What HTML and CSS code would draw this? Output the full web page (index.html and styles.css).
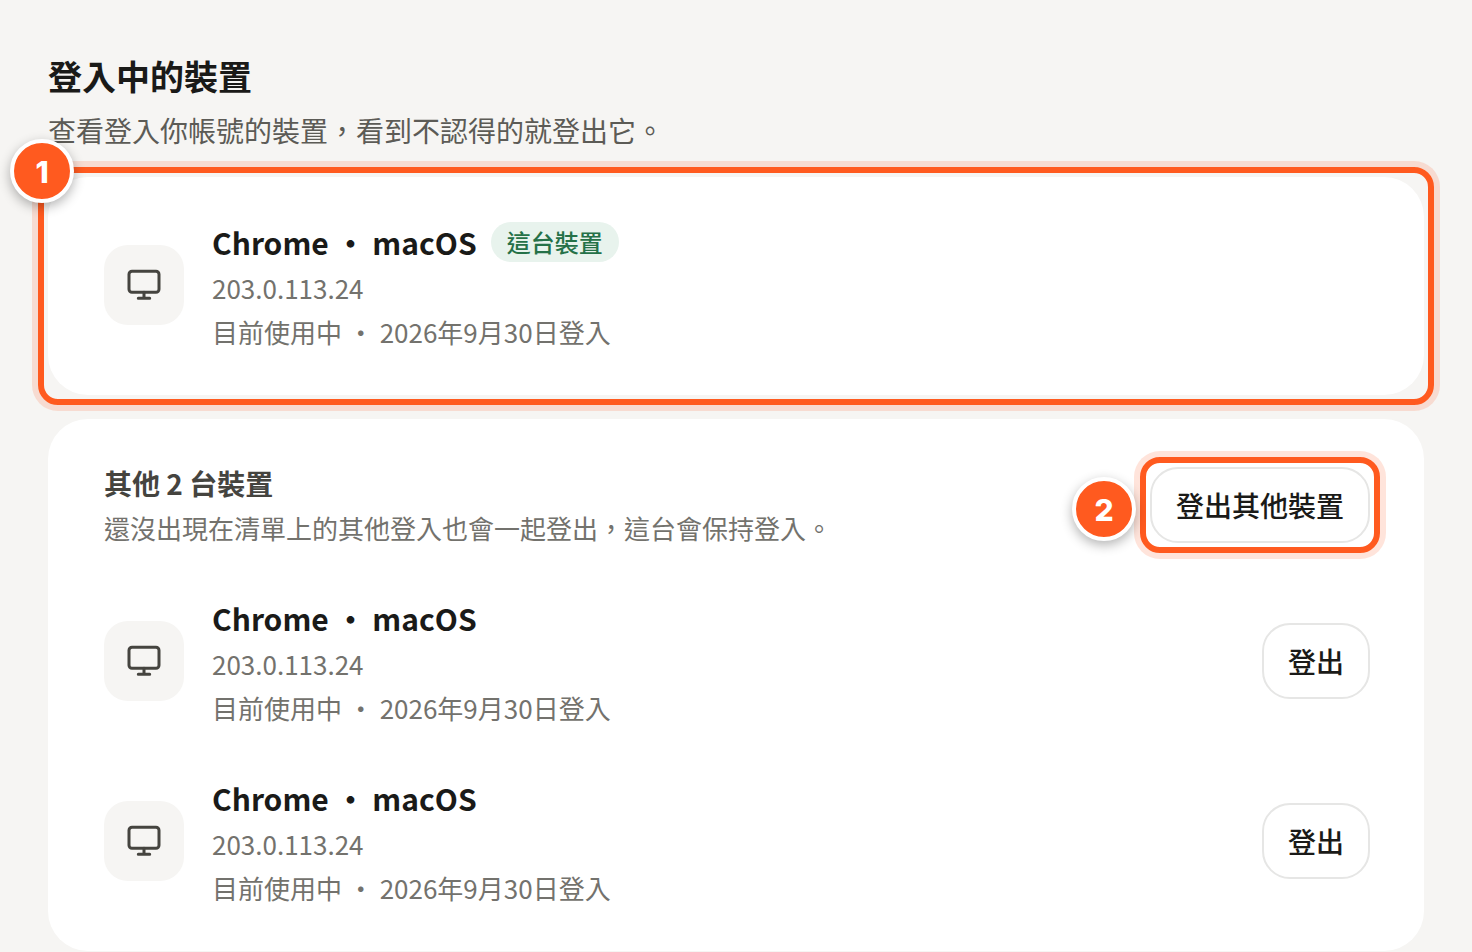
FILE: index.html
```html
<!DOCTYPE html>
<html lang="zh-Hant">
<head>
  <meta charset="UTF-8">
  <meta name="viewport" content="width=device-width, initial-scale=1.0">
  <title>登入中的裝置</title>
  <link rel="stylesheet" href="styles.css">
</head>
<body>
  <svg class="sprite" aria-hidden="true">
    <symbol id="monitor" viewBox="0 0 40 40">
      <rect x="5" y="6.3" width="30" height="21" rx="3"/>
      <path d="M20 27.3v6M14.3 33.3h11.4"/>
    </symbol>
  </svg>

  <main class="page">
    <header class="page-header">
      <h1>登入中的裝置</h1>
      <p>查看登入你帳號的裝置，看到不認得的就登出它。</p>
    </header>

    <section class="card marked">
      <span class="step step-corner">1</span>
      <div class="device">
        <span class="device-icon"><svg aria-hidden="true"><use href="#monitor"/></svg></span>
        <div class="device-info">
          <h2 class="device-name">Chrome ・ macOS <span class="tag">這台裝置</span></h2>
          <p class="device-ip">203.0.113.24</p>
          <p>目前使用中 ・ 2026年9月30日登入</p>
        </div>
      </div>
    </section>

    <section class="card">
      <div class="card-header">
        <div class="card-text">
          <h2>其他 2 台裝置</h2>
          <p>還沒出現在清單上的其他登入也會一起登出，這台會保持登入。</p>
        </div>
        <div class="marked">
          <span class="step step-side">2</span>
          <button type="button" class="btn">登出其他裝置</button>
        </div>
      </div>
      <div class="device">
        <span class="device-icon"><svg aria-hidden="true"><use href="#monitor"/></svg></span>
        <div class="device-info">
          <h3 class="device-name">Chrome ・ macOS</h3>
          <p class="device-ip">203.0.113.24</p>
          <p>目前使用中 ・ 2026年9月30日登入</p>
        </div>
        <button type="button" class="btn">登出</button>
      </div>
      <div class="device">
        <span class="device-icon"><svg aria-hidden="true"><use href="#monitor"/></svg></span>
        <div class="device-info">
          <h3 class="device-name">Chrome ・ macOS</h3>
          <p class="device-ip">203.0.113.24</p>
          <p>目前使用中 ・ 2026年9月30日登入</p>
        </div>
        <button type="button" class="btn">登出</button>
      </div>
    </section>
  </main>
</body>
</html>
```
FILE: styles.css
```css
* {
  box-sizing: border-box;
  margin: 0;
  padding: 0;
}
body {
  font-family: "Noto Sans CJK TC", sans-serif;
  background-color: #f6f5f3;
  color: #1a1a18;
}
.sprite {
  display: none;
}
.page {
  padding: 52px 48px 0;
}
.page-header {
  margin-bottom: 25px;
}
h1 {
  font-size: 34px;
  line-height: 48px;
  font-weight: 700;
}
.page-header p {
  margin-top: 8px;
  font-size: 28px;
  line-height: 44px;
  color: #5c5b56;
}
.card {
  padding: 18px 54px 20px 56px;
  border-radius: 40px;
  background-color: #fff;
}
.card + .card {
  margin-top: 24px;
}
.card-header {
  display: flex;
  align-items: center;
  justify-content: space-between;
  padding: 25px 0 23px;
}
.card-text h2 {
  font-size: 28px;
  line-height: 42px;
  font-weight: 600;
  color: #45443f;
}
.card-text p {
  margin-top: 4px;
  font-size: 26px;
  line-height: 40px;
  color: #73726d;
}

/* Device row */
.device {
  display: flex;
  align-items: center;
  gap: 28px;
  padding: 23px 0;
}
.device-icon {
  display: flex;
  align-items: center;
  justify-content: center;
  flex: none;
  width: 80px;
  height: 80px;
  border-radius: 24px;
  background-color: #f6f5f3;
}
.device-icon svg {
  width: 40px;
  height: 40px;
  fill: none;
  stroke: #45443f;
  stroke-width: 3;
  stroke-linecap: round;
  stroke-linejoin: round;
}
.device-info {
  flex: 1;
  font-size: 26px;
  line-height: 40px;
  color: #73726d;
}
.device-name {
  display: flex;
  align-items: center;
  gap: 14px;
  font-size: 30px;
  line-height: 48px;
  font-weight: 600;
  color: #1a1a18;
}
.device-ip {
  margin: 2px 0 4px;
}
.tag {
  padding: 0 16px;
  border-radius: 20px;
  background-color: #e8f3ed;
  color: #257148;
  font-size: 24px;
  line-height: 40px;
  font-weight: 500;
}
.btn {
  height: 76px;
  padding: 0 24px;
  border: 2px solid #e6e6e5;
  border-radius: 28px;
  background-color: #fff;
  color: #1a1a18;
  font-family: inherit;
  font-size: 28px;
  font-weight: 500;
  cursor: pointer;
}

/* Numbered callouts */
.marked {
  position: relative;
}
.marked::after {
  content: "";
  position: absolute;
  inset: -10px;
  border: 6px solid #ff5a1f;
  border-radius: 20px;
  box-shadow: 0 0 0 6px rgba(255, 90, 31, 0.16);
  pointer-events: none;
}
.step {
  position: absolute;
  z-index: 1;
  width: 64px;
  height: 64px;
  border: 4px solid #fff;
  border-radius: 50%;
  background-color: #ff5a1f;
  box-shadow: 0 4px 12px rgba(0, 0, 0, 0.3);
  color: #fff;
  font-family: Inter, sans-serif;
  font-size: 30px;
  line-height: 58px;
  font-weight: 800;
  text-align: center;
}
.step-corner {
  top: -38px;
  left: -38px;
}
.step-side {
  top: 10px;
  right: 234px;
}
```
